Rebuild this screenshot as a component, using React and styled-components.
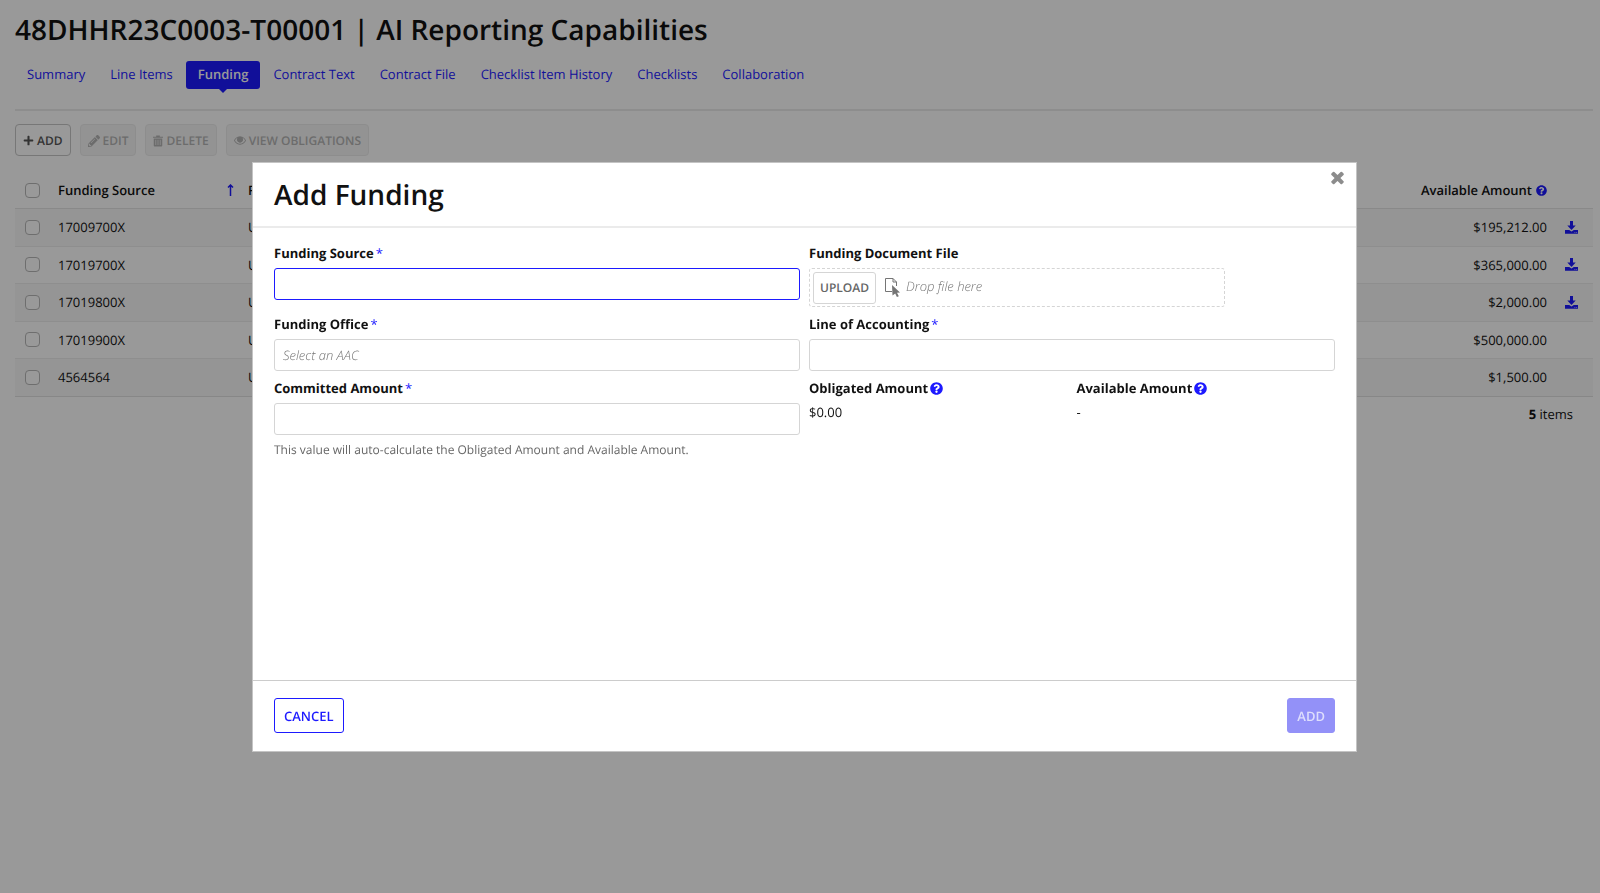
import React from 'react';
import styled, { createGlobalStyle } from 'styled-components';
import { FaPencilAlt, FaPlus, FaQuestionCircle } from 'react-icons/fa';

const blue = '#1d1aff';

const GlobalStyle = createGlobalStyle`
    * {
        box-sizing: border-box;
    }
    body {
        margin: 0;
        background: white;
        color: #111;
        font-family: "Open Sans", "Liberation Sans", sans-serif;
        font-size: 13px;
        line-height: 18px;
        text-rendering: geometricPrecision;
    }
    button, input {
        font: inherit;
        text-rendering: inherit;
    }
`;

const Page = styled.main`
    padding: 10px 7px 0 15px;
`;

const PageTitle = styled.h1`
    margin: 0;
    font-size: 28px;
    font-weight: 600;
    line-height: 40px;
`;

const Tabs = styled.nav`
    display: flex;
    gap: 1px;
    margin-top: 11px;
    padding-bottom: 20px;
    border-bottom: 2px solid #ebebeb;
`;

const Tab = styled.a`
    position: relative;
    padding: 4px 12px 6px;
    border-radius: 3px;
    color: ${props => props.$active ? 'white' : blue};
    background: ${props => props.$active ? blue : 'transparent'};
    font-weight: ${props => props.$active ? 600 : 400};
    text-decoration: none;

    &::after {
        content: "";
        display: ${props => props.$active ? 'block' : 'none'};
        position: absolute;
        top: 100%;
        left: 50%;
        margin-left: -4px;
        border: 4px solid transparent;
        border-top-color: ${blue};
        border-bottom: 0;
    }
`;

const Toolbar = styled.div`
    display: flex;
    gap: 9px;
    margin-top: 13px;
`;

const ToolButton = styled.button`
    display: flex;
    align-items: center;
    gap: 3px;
    height: 32px;
    padding: 1px 7px 0;
    border: 1px solid #c6c6c6;
    border-radius: 4px;
    background: white;
    color: #555;
    font-size: 12px;
    font-weight: 600;

    &:disabled {
        border-color: #ebebeb;
        background: #f6f6f6;
        color: #b4b4b4;
    }
`;

const Table = styled.table`
    width: 100%;
    margin-top: 17px;
    border-collapse: collapse;
    table-layout: fixed;
`;

const HeadCell = styled.th`
    width: ${props => props.$width || 'auto'};
    height: 35px;
    padding: 0 7px;
    border-bottom: 1px solid #e4e4e4;
    font-weight: 600;
    text-align: ${props => props.$align || 'left'};
`;

const HeadLabel = styled.span`
    display: flex;
    align-items: center;
    justify-content: ${props => props.$justify || 'space-between'};
    gap: 4px;
`;

const Row = styled.tr`
    height: 37px;
    border-bottom: 1px solid #ededed;

    &:nth-child(odd) {
        height: 38px;
        background: #f9f9f9;
    }
    &:last-child {
        border-bottom-color: #e2e2e2;
    }
`;

const Cell = styled.td`
    padding: 0 7px;
    text-align: ${props => props.$align || 'left'};
`;

const CheckBox = styled.input`
    display: block;
    appearance: none;
    width: 15px;
    height: 15px;
    margin: 0 0 0 3px;
    border: 1px solid #b8b8b8;
    border-radius: 4px;
    background: white;
`;

const IconLink = styled.a`
    display: flex;
    padding-left: 4px;
    color: ${blue};
`;

const Blue = styled.span`
    display: inline-flex;
    color: ${blue};
`;

const Count = styled.div`
    padding: 8px 20px;
    text-align: right;
`;

const Overlay = styled.div`
    position: fixed;
    inset: 0;
    display: flex;
    align-items: flex-start;
    padding: 162px 243px 0 252px;
    background: rgba(0, 0, 0, 0.4);
`;

const Dialog = styled.section`
    flex: 1;
    display: flex;
    flex-direction: column;
    border: 1px solid #c4c4c4;
    background: white;
`;

const DialogHead = styled.header`
    display: flex;
    align-items: flex-start;
    justify-content: space-between;
    padding: 12px 11px 11px 21px;
    border-bottom: 2px solid #ebebeb;
`;

const DialogTitle = styled.h2`
    margin: 0;
    font-size: 28px;
    font-weight: 600;
    line-height: 40px;
`;

const CloseButton = styled.button`
    display: flex;
    margin-top: -4px;
    padding: 0;
    border: 0;
    background: none;
    color: #8c8c8c;
`;

const Form = styled.form`
    display: grid;
    grid-template-columns: 1fr 1fr;
    column-gap: 9px;
    align-content: start;
    min-height: 452px;
    padding: 16px 21px;
`;

const Field = styled.div`
    display: flex;
    flex-direction: column;
    gap: 6px;
    padding-bottom: 8px;
`;

const Label = styled.label`
    display: flex;
    align-items: center;
    gap: 2px;
    color: #111;
    font-weight: 700;
`;

const Star = styled.span`
    color: ${blue};
    font-weight: 400;
`;

const TextInput = styled.input`
    width: 100%;
    height: 32px;
    padding: 0 8px 1px;
    border: 1px solid #d5d5d5;
    border-radius: 3px;
    outline: 0;
    background: white;

    &::placeholder {
        color: #757575;
        font-style: italic;
        font-weight: 300;
        opacity: 1;
    }
    &:focus {
        border-color: ${blue};
    }
`;

const Hint = styled.p`
    margin: 0;
    color: #666;
    font-size: 12px;
`;

const DropZone = styled.div`
    display: flex;
    align-items: center;
    width: 79%;
    height: 39px;
    padding: 0 3px;
    border: 1px dashed #d5d5d5;
    border-radius: 3px;
    color: #757575;
`;

const UploadButton = styled.button`
    height: 32px;
    margin-right: 9px;
    padding: 0 6px;
    border: 1px solid #d5d5d5;
    border-radius: 3px;
    background: white;
    color: #666;
    font-size: 12px;
    font-weight: 600;
`;

const DropText = styled.span`
    margin-left: 6px;
    padding-bottom: 3px;
    font-style: italic;
    font-weight: 300;
`;

const Amounts = styled.div`
    display: grid;
    grid-template-columns: 1fr 1fr;
    column-gap: 9px;
`;

const DialogFoot = styled.footer`
    display: flex;
    justify-content: space-between;
    padding: 17px 21px 18px;
    border-top: 1px solid #ccc;
`;

const FootButton = styled.button`
    height: 35px;
    padding: 0 9px;
    border: 1px solid ${blue};
    border-radius: 3px;
    background: white;
    color: ${blue};
    font-weight: 600;

    &:disabled {
        border-color: #9391f8;
        background: #9391f8;
        color: #dedefd;
    }
`;

function TrashIcon() {
  return (
    <svg width="10" height="12" viewBox="0 0 11 12" fill="currentColor" aria-hidden="true">
        <path d="M3.500 0h4v1.200H11v1.300H0V1.200h3.500z" />
        <path fillRule="evenodd" d="M.8 3.200h9.400V11q0 1-1 1H1.800q-1 0-1-1zM2.700 4.700v5.800h.8V4.700zM5.100 4.700v5.800h.8V4.700zM7.500 4.700v5.800h.8V4.700z" />
    </svg>
  );
}

function EyeIcon() {
  return (
    <svg width="12" height="9" viewBox="0 0 26 18" fill="currentColor" aria-hidden="true">
        <path fillRule="evenodd" d="M13 0C20 0 24 5 26 9c-2 4-6 9-13 9S2 13 0 9C2 5 6 0 13 0zM7.500 3C5 4.500 3 6.700 2 9c2 4 6 7 11 7s9-3 11-7c-1-2.300-3-4.500-5.500-6a6.500 6.500 0 1 1-11 0z" />
        <path fillRule="evenodd" d="M13 1.500a6 6 0 1 1 0 12 6 6 0 0 1 0-12zm0 1.500a4 4 0 0 0-4 4h1.500A2.500 2.500 0 0 1 13 4.500z" />
    </svg>
  );
}

function DownloadIcon() {
  return (
    <svg width="13" height="13" viewBox="0 0 13 13" fill="currentColor" aria-hidden="true">
        <path d="M5 0h3v4.500h2.700L6.500 9 2.300 4.500H5z" />
        <path fillRule="evenodd" d="M0 9h4.200l2.300 1.500L8.800 9H13v3.700H0zm9.500 2v.8h.8V11zm1.800 0v.8h.8V11z" />
    </svg>
  );
}

function CloseIcon() {
  return (
    <svg width="15" height="15" viewBox="192 302 1408 1408" fill="currentColor" aria-hidden="true">
        <path d="M1490 1322q0 40-28 68l-136 136q-28 28-68 28t-68-28l-294-294-294 294q-28 28-68 28t-68-28l-136-136q-28-28-28-68t28-68l294-294-294-294q-28-28-28-68t28-68l136-136q28-28 68-28t68 28l294 294 294-294q28-28 68-28t68 28l136 136q28 28 28 68t-28 68l-294 294 294 294q28 28 28 68z" />
    </svg>
  );
}

function DropIcon() {
  return (
    <svg width="15" height="19" viewBox="0 0 15 19" aria-hidden="true">
        <path d="M.5.500H8L11.500 4v4M.5.500v13H7M8 .5V4h3.500" fill="none" stroke="currentColor" />
        <path d="M7 7l8 7.500-3 .3 1.800 3.400-1.900.8-1.700-3.500L7.500 17.500z" fill="currentColor" />
    </svg>
  );
}

const tabs = ['Summary', 'Line Items', 'Funding', 'Contract Text', 'Contract File', 'Checklist Item History', 'Checklists', 'Collaboration'];

const rows = [
  { source: '17009700X', amount: '$195,212.00', file: true },
  { source: '17019700X', amount: '$365,000.00', file: true },
  { source: '17019800X', amount: '$2,000.00', file: true },
  { source: '17019900X', amount: '$500,000.00', file: false },
  { source: '4564564', amount: '$1,500.00', file: false },
];

function FundingTable() {
  return (
    <>
        <Table>
            <thead>
                <tr>
                    <HeadCell $width="36px"><CheckBox type="checkbox" aria-label="Select all rows" /></HeadCell>
                    <HeadCell $width="190px">
                        <HeadLabel>
                            Funding Source
                            <Blue>
                                <svg width="7" height="12" viewBox="0 0 7 12" aria-hidden="true">
                                    <path d="M3.500 12V1M1 3.500L3.500 1 6 3.500" fill="none" stroke="currentColor" strokeWidth="1.500" />
                                </svg>
                            </Blue>
                        </HeadLabel>
                    </HeadCell>
                    <HeadCell>F</HeadCell>
                    <HeadCell $width="180px">
                        <HeadLabel $justify="flex-end">Available Amount <Blue><FaQuestionCircle size={11} /></Blue></HeadLabel>
                    </HeadCell>
                    <HeadCell $width="39px" aria-label="Document" />
                </tr>
            </thead>
            <tbody>
                {rows.map(row => (
                    <Row key={row.source}>
                        <Cell><CheckBox type="checkbox" aria-label={row.source} /></Cell>
                        <Cell>{row.source}</Cell>
                        <Cell>U</Cell>
                        <Cell $align="right">{row.amount}</Cell>
                        <Cell>{row.file && <IconLink href="#download" aria-label="Download"><DownloadIcon /></IconLink>}</Cell>
                    </Row>
                ))}
            </tbody>
        </Table>
        <Count><b>5</b> items</Count>
    </>
  );
}

function InputField(props) {
  return (
    <Field>
        <Label htmlFor={props.id}>{props.label}<Star>*</Star></Label>
        <TextInput id={props.id} placeholder={props.placeholder} autoFocus={props.autoFocus} />
        {props.hint && <Hint>{props.hint}</Hint>}
    </Field>
  );
}

function Amount(props) {
  return (
    <Field>
        <Label as="span">{props.label} <Blue><FaQuestionCircle size={13} /></Blue></Label>
        <span>{props.value}</span>
    </Field>
  );
}

function AddFundingDialog() {
  return (
    <Overlay>
        <Dialog role="dialog" aria-labelledby="dialog-title">
            <DialogHead>
                <DialogTitle id="dialog-title">Add Funding</DialogTitle>
                <CloseButton aria-label="Close"><CloseIcon /></CloseButton>
            </DialogHead>
            <Form id="funding-form">
                <InputField id="source" label="Funding Source" autoFocus />
                <Field>
                    <Label htmlFor="upload">Funding Document File</Label>
                    <DropZone>
                        <UploadButton id="upload" type="button">UPLOAD</UploadButton>
                        <DropIcon />
                        <DropText>Drop file here</DropText>
                    </DropZone>
                </Field>
                <InputField id="office" label="Funding Office" placeholder="Select an AAC" />
                <InputField id="accounting" label="Line of Accounting" />
                <InputField id="committed" label="Committed Amount" hint="This value will auto-calculate the Obligated Amount and Available Amount." />
                <Amounts>
                    <Amount label="Obligated Amount" value="$0.00" />
                    <Amount label="Available Amount" value="-" />
                </Amounts>
            </Form>
            <DialogFoot>
                <FootButton type="button">CANCEL</FootButton>
                <FootButton type="submit" form="funding-form" disabled>ADD</FootButton>
            </DialogFoot>
        </Dialog>
    </Overlay>
  );
}

function App() {
  return (
    <>
        <GlobalStyle />
        <Page>
            <PageTitle>48DHHR23C0003-T00001 | AI Reporting Capabilities</PageTitle>
            <Tabs>
                {tabs.map(tab => <Tab key={tab} href="#" $active={tab === 'Funding'}>{tab}</Tab>)}
            </Tabs>
            <Toolbar>
                <ToolButton><FaPlus size={11} />ADD</ToolButton>
                <ToolButton disabled><FaPencilAlt size={12} />EDIT</ToolButton>
                <ToolButton disabled><TrashIcon />DELETE</ToolButton>
                <ToolButton disabled><EyeIcon />VIEW OBLIGATIONS</ToolButton>
            </Toolbar>
            <FundingTable />
        </Page>
        <AddFundingDialog />
    </>
  );
}

export default App;
